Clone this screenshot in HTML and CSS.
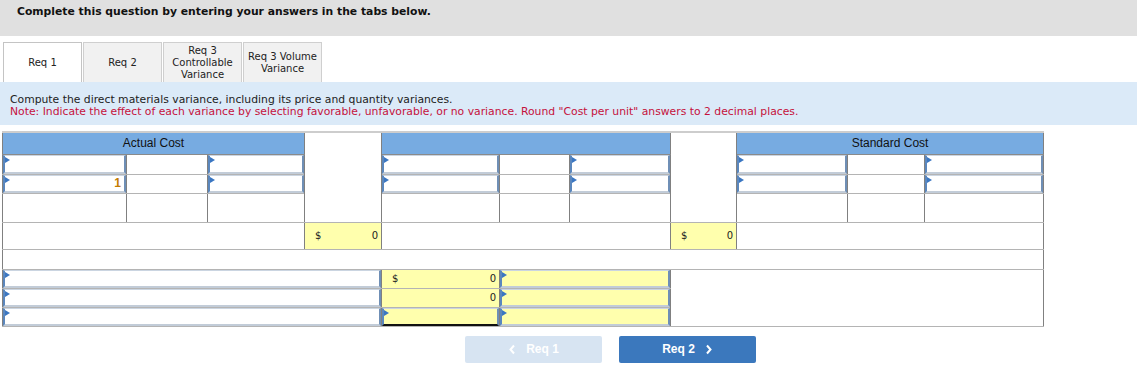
FILE: index.html
```html
<!doctype html>
<html lang="en">

<head>
  <meta charset="UTF-8" />
  <title>Direct Materials Variance</title>
  <link rel="stylesheet" href="styles.css">
</head>

<body>
  <div class="banner">Complete this question by entering your answers in the tabs below.</div>

  <div class="tabs">
    <div class="tab active">Req 1</div>
    <div class="tab">Req 2</div>
    <div class="tab">Req 3<br>Controllable<br>Variance</div>
    <div class="tab">Req 3 Volume<br>Variance</div>
  </div>

  <div class="instructions">
    <p>Compute the direct materials variance, including its price and quantity variances.</p>
    <p class="note">Note: Indicate the effect of each variance by selecting favorable, unfavorable, or no variance. Round "Cost per unit" answers to 2 decimal places.</p>
  </div>

  <table class="grid">
    <colgroup>
      <col style="width:124px">
      <col style="width:81px">
      <col style="width:97px">
      <col style="width:77px">
      <col style="width:118px">
      <col style="width:70px">
      <col style="width:101px">
      <col style="width:66px">
      <col style="width:111px">
      <col style="width:77px">
      <col style="width:119px">
    </colgroup>
    <tr class="head-row">
      <th colspan="3">Actual Cost</th>
      <td class="spacer" rowspan="4"></td>
      <th colspan="3"></th>
      <td class="spacer" rowspan="4"></td>
      <th colspan="3">Standard Cost</th>
    </tr>
    <tr class="row-input">
      <td><div class="select"></div></td>
      <td class="plain-input"></td>
      <td><div class="select"></div></td>
      <td><div class="select"></div></td>
      <td class="plain-input"></td>
      <td><div class="select"></div></td>
      <td><div class="select"></div></td>
      <td class="plain-input"></td>
      <td><div class="select"></div></td>
    </tr>
    <tr class="row-input">
      <td><div class="select"><span class="value">1</span></div></td>
      <td class="plain-input"></td>
      <td><div class="select"></div></td>
      <td><div class="select"></div></td>
      <td class="plain-input"></td>
      <td><div class="select"></div></td>
      <td><div class="select"></div></td>
      <td class="plain-input"></td>
      <td><div class="select"></div></td>
    </tr>
    <tr class="row-tall">
      <td></td>
      <td class="plain-input"></td>
      <td></td>
      <td></td>
      <td></td>
      <td></td>
      <td></td>
      <td class="plain-input"></td>
      <td></td>
    </tr>
    <tr class="row-total">
      <td colspan="3"></td>
      <td class="calc"><div class="amount"><span>$</span><span>0</span></div></td>
      <td colspan="3"></td>
      <td class="calc"><div class="amount"><span>$</span><span>0</span></div></td>
      <td colspan="3"></td>
    </tr>
    <tr class="row-blank">
      <td colspan="11"></td>
    </tr>
    <tr class="row-input">
      <td colspan="4"><div class="select"></div></td>
      <td class="calc"><div class="amount"><span>$</span><span>0</span></div></td>
      <td class="calc" colspan="2"><div class="select"></div></td>
      <td colspan="4" rowspan="3"></td>
    </tr>
    <tr class="row-input">
      <td colspan="4"><div class="select"></div></td>
      <td class="calc subtotal"><div class="amount"><span></span><span>0</span></div></td>
      <td class="calc" colspan="2"><div class="select"></div></td>
    </tr>
    <tr class="row-input">
      <td colspan="4"><div class="select"></div></td>
      <td class="calc grand"><div class="select"></div></td>
      <td class="calc" colspan="2"><div class="select"></div></td>
    </tr>
  </table>

  <div class="nav">
    <button type="button" class="nav-button" disabled>
      <svg class="chevron" width="8" height="11" viewBox="0 0 8 11"><path d="M6 1.5 2.5 5.5 6 9.5" fill="none" stroke="currentColor" stroke-width="2"/></svg>
      <span>Req 1</span>
    </button>
    <button type="button" class="nav-button next">
      <span>Req 2</span>
      <svg class="chevron" width="8" height="11" viewBox="0 0 8 11"><path d="M2 1.5 5.5 5.5 2 9.5" fill="none" stroke="currentColor" stroke-width="2"/></svg>
    </button>
  </div>
</body>

</html>
```

FILE: styles.css
```css
* {
  margin: 0;
  padding: 0;
  box-sizing: border-box;
}

body {
  font-family: 'DejaVu Sans', Verdana, sans-serif;
  font-size: 10.8px;
  color: #222;
  background-color: white;
}

.banner {
  height: 36px;
  padding: 5px 0 0 17px;
  background-color: #e0e0e0;
  font-weight: bold;
  font-size: 10.8px;
  color: #111;
}

.tabs {
  display: flex;
  gap: 1px;
  margin-top: 6px;
  padding-left: 3px;
}

.tab {
  width: 79px;
  height: 40px;
  display: flex;
  align-items: center;
  justify-content: center;
  padding-top: 1px;
  text-align: center;
  font-size: 10px;
  line-height: 12px;
  background-color: #f1f1f1;
  border: 1px solid #cfcfcf;
  border-bottom: none;
}

.tab.active {
  background-color: white;
  border-color: #c4c4c4;
}

.instructions {
  height: 43px;
  padding: 12px 0 0 10px;
  background-color: #dbeaf8;
  line-height: 12px;
}

.note {
  color: #c5113c;
}

.grid {
  margin: 6px 0 0 2px;
  width: 1042px;
  table-layout: fixed;
  border-collapse: collapse;
  border-top: 2px solid #cdcdcd;
}

.grid th,
.grid td {
  padding: 0;
  border: 1px solid #808080;
  border-top-color: #b4b4b4;
  border-bottom-color: #b4b4b4;
}

.grid th {
  height: 22px;
  background-color: #77abe1;
  font-family: 'Liberation Sans', Arial, sans-serif;
  font-weight: normal;
  font-size: 12px;
  color: #111;
  border-bottom-color: #8a8a8a;
}

.spacer {
  background-color: white;
}

.row-input td {
  height: 19px;
}

.head-row + .row-input td {
  height: 20px;
}

.row-tall td {
  height: 29px;
}

.row-total td {
  height: 27px;
}

.row-blank td {
  height: 20px;
}

.plain-input {
  border-bottom: 2px solid #b4b4b4;
}

.select {
  position: relative;
  height: 100%;
  display: flex;
  align-items: center;
  justify-content: flex-end;
  padding-right: 3px;
  border-left: 2px solid #5b87bd;
  border-right: 2px solid #6f8fb6;
  border-top: 1px solid #cbd5e1;
  border-bottom: 2px solid #c2ccd8;
}

.select::before {
  content: "";
  position: absolute;
  top: 1px;
  left: 0;
  border-left: 5px solid #3b77c2;
  border-top: 3px solid transparent;
  border-bottom: 3px solid transparent;
}

.value {
  font-family: 'Liberation Sans', Arial, sans-serif;
  font-weight: bold;
  font-size: 12px;
  color: #c47c00;
}

.calc {
  background-color: #ffffad;
  font-size: 10px;
}

.amount {
  display: flex;
  justify-content: space-between;
  padding: 0 3px 0 10px;
}

.subtotal {
  border-bottom: 2px solid #6e6e6e;
}

.grand .select {
  border-bottom: 2px solid #111;
}

.nav {
  display: flex;
  gap: 17px;
  margin: 9px 0 0 465px;
}

.nav-button {
  width: 137px;
  height: 27px;
  display: flex;
  align-items: center;
  justify-content: center;
  gap: 10px;
  border: none;
  border-radius: 2px;
  background-color: #3b78bd;
  color: white;
  font-family: 'Liberation Sans Narrow', 'Liberation Sans', Arial, sans-serif;
  font-weight: bold;
  font-size: 12px;
  cursor: pointer;
}

.nav-button:disabled {
  background-color: #d7e4f2;
  cursor: not-allowed;
}
```
